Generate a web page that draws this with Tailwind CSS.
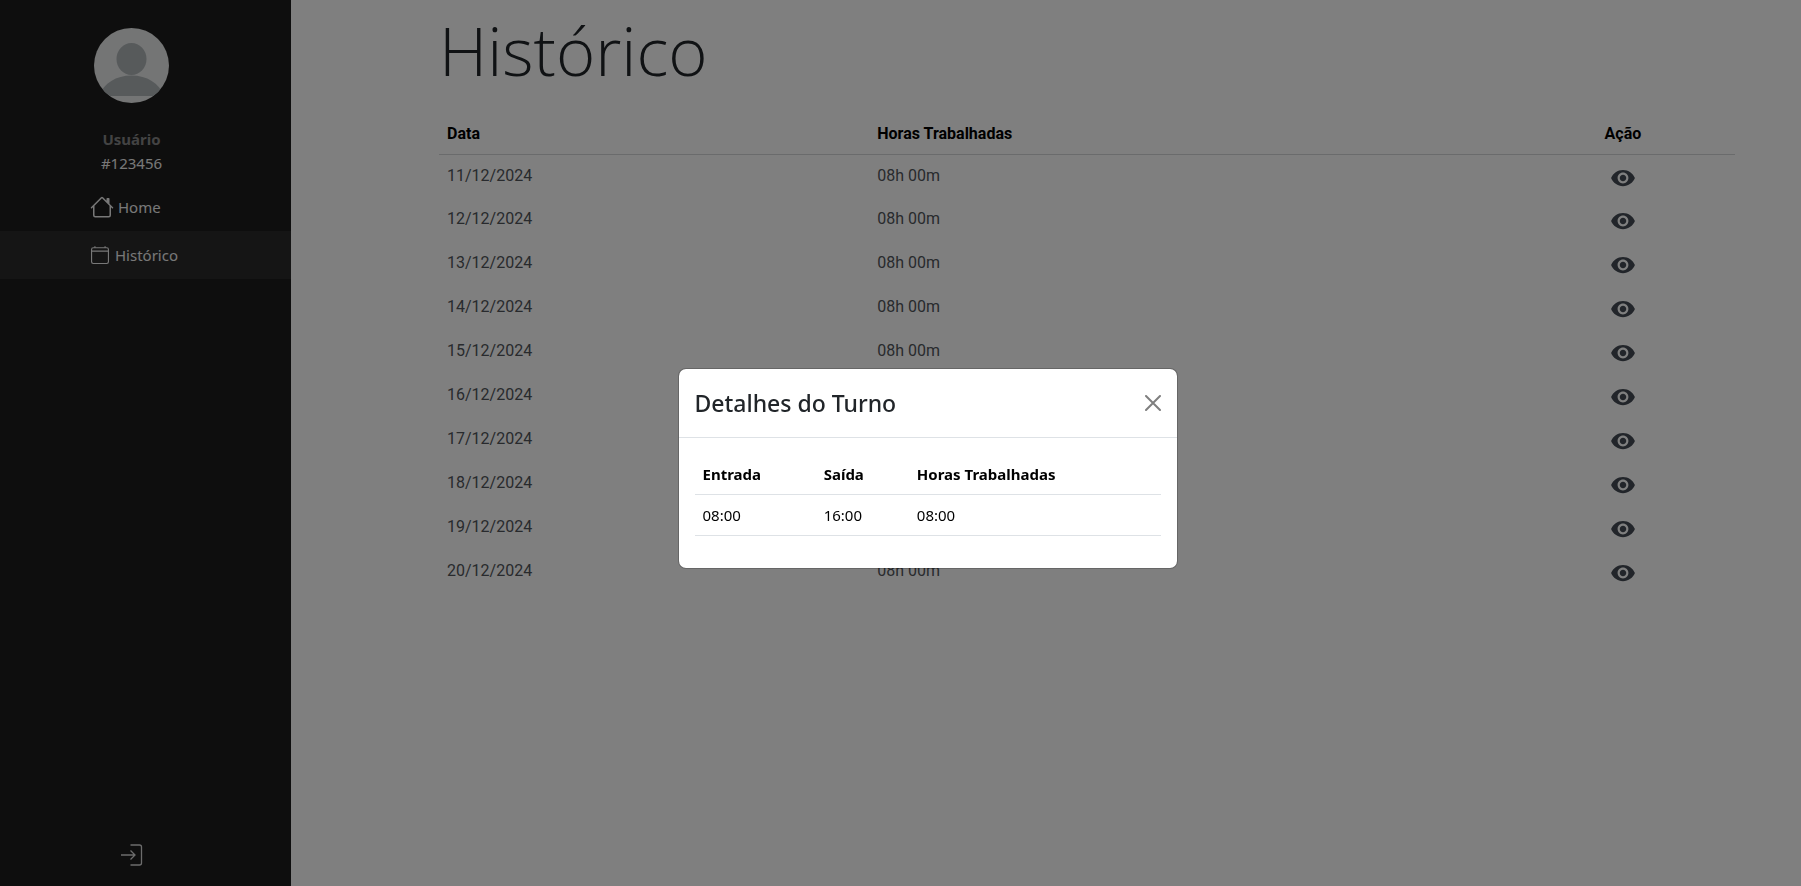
<!DOCTYPE html>
<html lang="pt-BR">
<head>
<meta charset="utf-8">
<meta name="viewport" content="width=device-width, initial-scale=1">
<title>Histórico</title>
<script src="https://cdn.jsdelivr.net/npm/@tailwindcss/browser@4"></script>
</head>
<body class="bg-white font-['Segoe_UI','Noto_Sans',sans-serif] text-[15px] leading-6 text-[#212529]">
<svg class="hidden" aria-hidden="true">
  <symbol id="eye" viewBox="0 0 24 24"><path fill="currentColor" d="M12 4.500C7 4.500 2.730 7.610 1 12c1.730 4.390 6 7.500 11 7.500s9.270-3.110 11-7.500c-1.730-4.390-6-7.500-11-7.500zM12 17c-2.760 0-5-2.240-5-5s2.240-5 5-5 5 2.240 5 5-2.240 5-5 5zm0-8c-1.660 0-3 1.340-3 3s1.340 3 3 3 3-1.340 3-3-1.340-3-3-3z"/></symbol>
</svg>
<div class="flex min-h-screen">
  <aside class="flex w-[291px] shrink-0 flex-col bg-[#1c1c1c] pt-7 text-[#f0f0f0]">
    <div class="flex w-[263px] flex-col items-center">
      <svg class="size-[75px]" viewBox="0 0 75 75" role="img" aria-label="Foto do usuário">
        <clipPath id="avatar"><circle cx="37.500" cy="37.500" r="37.500"/></clipPath>
        <g clip-path="url(#avatar)">
          <path fill="#e8eaea" d="M0 0h75v75H0z"/>
          <ellipse cx="37.500" cy="31" rx="15" ry="16" fill="#aeb4b7"/>
          <path fill="#aeb4b7" d="M5 68C10 55 22 47.500 37.500 47.500S65 55 70 68z"/>
        </g>
      </svg>
      <p class="mt-6 font-bold text-[#878787]">Usuário</p>
      <p>#123456</p>
    </div>
    <nav class="mt-2">
      <a href="#" class="flex h-12 items-center gap-1 pl-[90px]">
        <svg class="size-6" viewBox="0 0 16 16" fill="currentColor"><path d="M8.707 1.500a1 1 0 0 0-1.414 0L.646 8.146a.5.5 0 0 0 .708.708L2 8.207V13.500A1.500 1.500 0 0 0 3.500 15h9a1.500 1.500 0 0 0 1.500-1.500V8.207l.646.647a.5.5 0 0 0 .708-.708L13 5.793V2.500a.5.5 0 0 0-.5-.5h-1a.5.5 0 0 0-.5.5v1.293zM13 7.207V13.500a.5.5 0 0 1-.5.5h-9a.5.5 0 0 1-.5-.5V7.207l5-5z"/></svg>
        Home
      </a>
      <a href="#" class="flex h-12 items-center gap-1.5 bg-[#2a2a2a] pl-[91px]">
        <svg class="size-[18px]" viewBox="0 0 16 16" fill="currentColor"><path d="M3.500 0a.5.5 0 0 1 .5.5V1h8V.5a.5.5 0 0 1 1 0V1h1a2 2 0 0 1 2 2v11a2 2 0 0 1-2 2H2a2 2 0 0 1-2-2V3a2 2 0 0 1 2-2h1V.5a.5.5 0 0 1 .5-.5M2 2a1 1 0 0 0-1 1v1h14V3a1 1 0 0 0-1-1zm13 3H1v9a1 1 0 0 0 1 1h12a1 1 0 0 0 1-1z"/></svg>
        Histórico
      </a>
    </nav>
    <div class="mt-auto flex w-[263px] justify-center pb-[19px]">
      <button type="button" aria-label="Sair" class="text-[#d8d8d8]">
        <svg class="size-6" viewBox="0 0 24 24" fill="none" stroke="currentColor" stroke-width="1.300"><path d="M10.500 2h9a2 2 0 0 1 2 2v16a2 2 0 0 1-2 2h-9M1 12h14M10.500 7.500 15 12l-4.500 4.500"/></svg>
      </button>
    </div>
  </aside>
  <main class="grow pr-[66px] pl-[148px]">
    <h1 class="pt-0.5 font-['Segoe_UI_Light','Open_Sans',sans-serif] text-[67px] leading-24 font-light">Histórico</h1>
    <table class="mt-3.5 w-full table-fixed text-left font-[Roboto,sans-serif] text-base">
      <colgroup><col class="w-[33.2%]"><col class="w-[49.5%]"><col></colgroup>
      <thead class="text-black">
        <tr class="h-[42px] border-b border-[#d4d6d8]"><th class="px-2 pt-0.5 font-bold">Data</th><th class="px-2 pt-0.5 font-bold">Horas Trabalhadas</th><th class="px-2 pt-0.5 text-center font-bold">Ação</th></tr>
      </thead>
      <tbody id="rows" class="text-[#50555a]"></tbody>
    </table>
  </main>
</div>
<div class="fixed inset-0 flex items-center justify-center bg-black/50 pt-[50px] pl-[54px]">
  <section role="dialog" aria-modal="true" aria-labelledby="titulo" class="w-[500px] rounded-lg border border-black/20 bg-white bg-clip-padding">
    <header class="flex items-center justify-between border-b border-[#dee2e6] p-4">
      <h2 id="titulo" class="text-[23px] leading-9 font-medium">Detalhes do Turno</h2>
      <button type="button" aria-label="Fechar" class="text-black/50"><svg class="size-4" viewBox="0 0 16 16" fill="none" stroke="currentColor" stroke-width="2" stroke-linecap="round"><path d="m1 1 14 14M15 1 1 15"/></svg></button>
    </header>
    <div class="px-4 pt-4 pb-8">
      <table class="w-full table-fixed text-left text-black">
        <colgroup><col class="w-[26%]"><col class="w-[20%]"><col></colgroup>
        <thead><tr class="border-b border-[#dee2e6]"><th class="p-2 font-bold">Entrada</th><th class="p-2 font-bold">Saída</th><th class="p-2 font-bold">Horas Trabalhadas</th></tr></thead>
        <tbody><tr class="border-b border-[#dee2e6]"><td class="p-2">08:00</td><td class="p-2">16:00</td><td class="p-2">08:00</td></tr></tbody>
      </table>
    </div>
  </section>
</div>
<script>
  const rows = document.getElementById('rows');
  for (let day = 11; day <= 20; day++) {
    rows.insertAdjacentHTML('beforeend', `<tr class="h-11 align-top"><td class="px-2 pt-[9px]">${day}/12/2024</td><td class="px-2 pt-[9px]">08h 00m</td><td class="px-2 pt-[9px] text-center"><button type="button" aria-label="Ver detalhes de ${day}/12/2024" class="mx-auto mt-px block text-[#444b54]"><svg class="size-[26px]"><use href="#eye"/></svg></button></td></tr>`);
  }
</script>
</body>
</html>
